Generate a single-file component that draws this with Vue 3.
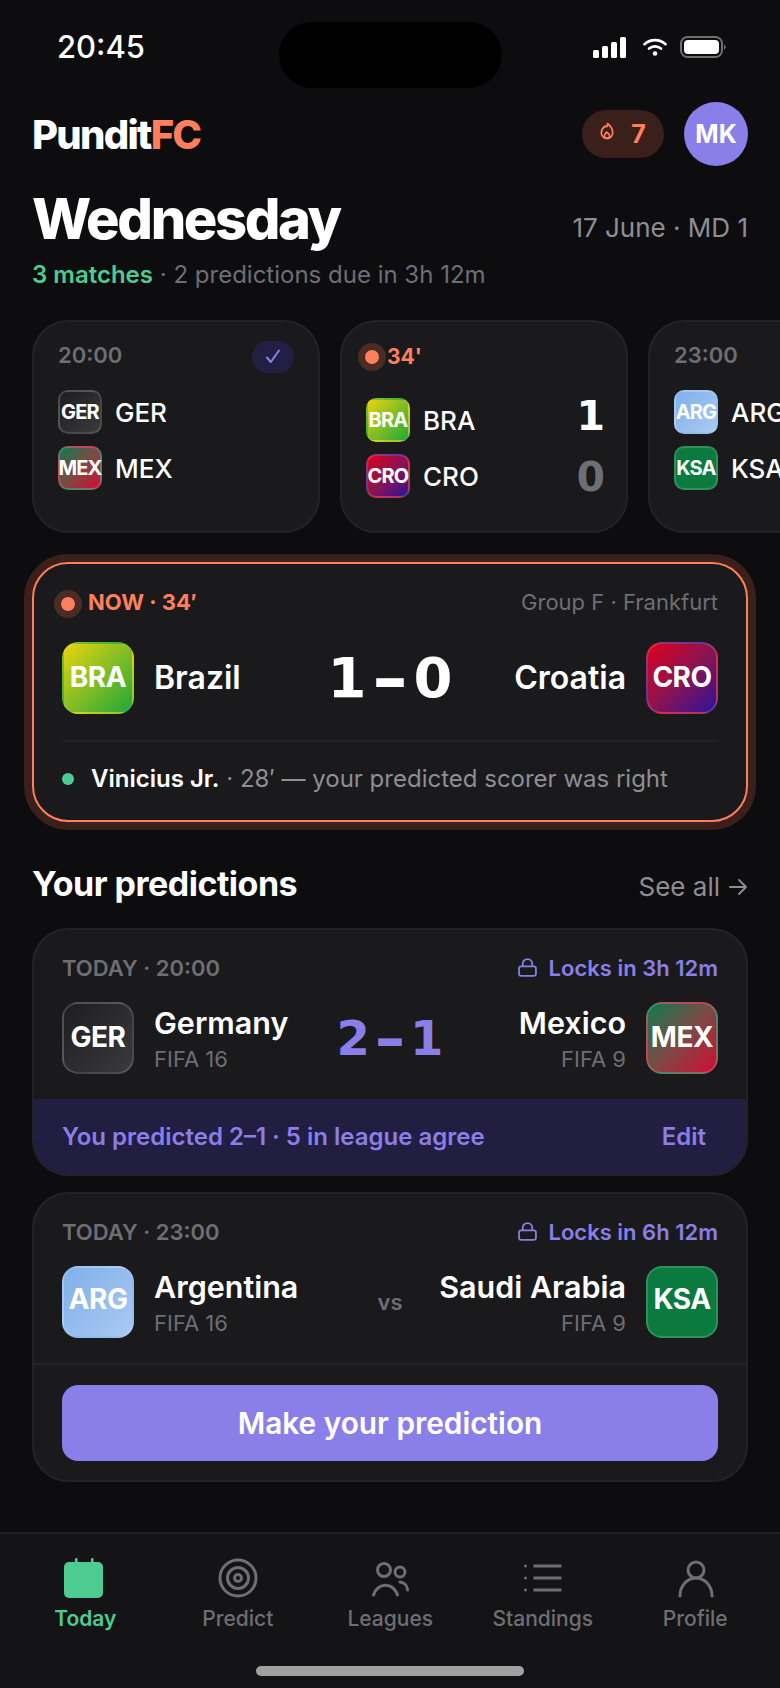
<script setup>
const cards = [
  { id: 1, time: '20:00', picked: true, teams: [{ code: 'GER', cls: 'ger' }, { code: 'MEX', cls: 'mex' }] },
  { id: 2, live: "34'", teams: [{ code: 'BRA', cls: 'bra', score: 1 }, { code: 'CRO', cls: 'cro', score: 0, dim: true }] },
  { id: 3, time: '23:00', teams: [{ code: 'ARG', cls: 'arg' }, { code: 'KSA', cls: 'ksa' }] }
]
const tabs = ['Today', 'Predict', 'Leagues', 'Standings', 'Profile']
</script>

<template>
  <div class="screen">
    <div class="status">
      <span class="clock">20:45</span>
      <div class="island"></div>
      <div class="status-icons">
        <svg width="33" height="21" viewBox="0 0 33 21" fill="#fff">
          <rect x="0" y="13" width="6" height="8" rx="1.5" />
          <rect x="9" y="9" width="6" height="12" rx="1.5" />
          <rect x="18" y="5" width="6" height="16" rx="1.5" />
          <rect x="27" y="0" width="6" height="21" rx="1.5" />
        </svg>
        <svg class="wifi" width="24" height="18" viewBox="0 0 24 18" fill="none" stroke="#fff" stroke-width="2.6" stroke-linecap="round">
          <path d="M1.5 6.2C7.5 .8 16.5 .8 22.5 6.2" />
          <path d="M6 10.6c3.5-3 8.5-3 12 0" />
          <circle cx="12" cy="15.5" r="2.3" fill="#fff" stroke="none" />
        </svg>
        <svg width="46" height="22" viewBox="0 0 46 22" fill="none">
          <rect x="1" y="1" width="41" height="20" rx="6.5" stroke="#6e6e73" stroke-width="2" />
          <rect x="4" y="4" width="35" height="14" rx="4" fill="#fff" />
          <path d="M44 8l2 3-2 3z" fill="#6e6e73" />
        </svg>
      </div>
    </div>

    <main class="content">
      <header class="top">
        <div class="logo">Pundit<span>FC</span></div>
        <div class="top-right">
          <div class="streak">
            <svg class="flame" width="14" height="18" viewBox="0 0 16 20" fill="none" stroke="#ff7f5c" stroke-width="2" stroke-linejoin="round">
              <path d="M8.5 1.5c.5 3.2-1 4.4-2.6 2.8C3.4 6.4 1.5 8.9 1.5 12c0 3.7 2.9 6.5 6.5 6.5s6.5-2.8 6.500-6.500c0-4.600-3-8.200-6-10.500z" />
              <path d="M8 18.500c-1.800 0-3-1.300-3-3 0-1.600 1.500-2.600 2.600-4.300 1.400 1.300 3.400 2.500 3.400 4.300 0 1.700-1.200 3-3 3z" />
            </svg>
            <span>7</span>
          </div>
          <div class="avatar">MK</div>
        </div>
      </header>

      <div class="title-row">
        <h1>Wednesday</h1>
        <span class="date">17 June · MD 1</span>
      </div>
      <p class="sub"><b>3 matches</b> · 2 predictions due in 3h 12m</p>

      <div class="rail">
        <article v-for="c in cards" :key="c.id" class="mini" :class="{ 'mini-live': c.live }">
          <div class="mini-head">
            <div v-if="c.live" class="live-tag"><i class="halo"><i></i></i><span>{{ c.live }}</span></div>
            <span v-else class="mini-time">{{ c.time }}</span>
            <span v-if="c.picked" class="check">
              <svg width="16" height="15" viewBox="0 0 16 15" fill="none" stroke="#8a7fe8" stroke-width="2" stroke-linecap="round" stroke-linejoin="round"><path d="M2 8.500l3.800 4.500L14 1.500" /></svg>
            </span>
          </div>
          <div v-for="t in c.teams" :key="t.code" class="mini-team">
            <span class="crest crest-s" :class="t.cls">{{ t.code }}</span>
            <span class="mini-code">{{ t.code }}</span>
            <span v-if="t.score !== undefined" class="mini-score" :class="{ dim: t.dim }">{{ t.score }}</span>
          </div>
        </article>
      </div>

      <section class="hero">
        <div class="hero-head">
          <div class="now"><i class="halo"><i></i></i><span>NOW · 34′</span></div>
          <span class="venue">Group F · Frankfurt</span>
        </div>
        <div class="hero-main">
          <div class="side">
            <span class="crest crest-l bra">BRA</span>
            <span class="name">Brazil</span>
          </div>
          <div class="hero-score"><span>1</span><span class="dash">–</span><span>0</span></div>
          <div class="side side-r">
            <span class="name">Croatia</span>
            <span class="crest crest-l cro">CRO</span>
          </div>
        </div>
        <div class="scorer">
          <i></i>
          <p><b>Vinicius Jr.</b> · 28′ — your predicted scorer was right</p>
        </div>
      </section>

      <div class="section-head">
        <h2>Your predictions</h2>
        <span class="see">See all
          <svg width="20" height="18" viewBox="0 0 20 18" fill="none" stroke="#8e8e93" stroke-width="1.800" stroke-linecap="round" stroke-linejoin="round"><path d="M2 9h16M11 2l7 7-7 7" /></svg>
        </span>
      </div>

      <section class="pred">
        <div class="pred-body">
          <div class="pred-head">
            <span class="when">TODAY · 20:00</span>
            <span class="locks">
              <svg width="19" height="19" viewBox="0 0 18 18" fill="none" stroke="#8a7fe8" stroke-width="1.700"><rect x="1" y="8" width="16" height="9" rx="2" /><path d="M4.500 8V5.500a4.500 4.500 0 0 1 9 0V8" /></svg>
              Locks in 3h 12m
            </span>
          </div>
          <div class="pred-main">
            <div class="side">
              <span class="crest crest-l ger">GER</span>
              <div class="who"><span class="name-p">Germany</span><span class="rank">FIFA 16</span></div>
            </div>
            <div class="pred-score"><span>2</span><span class="dash">–</span><span>1</span></div>
            <div class="side side-r">
              <div class="who who-r"><span class="name-p">Mexico</span><span class="rank">FIFA 9</span></div>
              <span class="crest crest-l mex">MEX</span>
            </div>
          </div>
        </div>
        <div class="band">
          <span>You predicted 2–1 · 5 in league agree</span>
          <span class="edit">Edit</span>
        </div>
      </section>

      <section class="pred pred-2">
        <div class="pred-body body-2">
          <div class="pred-head">
            <span class="when">TODAY · 23:00</span>
            <span class="locks">
              <svg width="19" height="19" viewBox="0 0 18 18" fill="none" stroke="#8a7fe8" stroke-width="1.700"><rect x="1" y="8" width="16" height="9" rx="2" /><path d="M4.500 8V5.500a4.500 4.500 0 0 1 9 0V8" /></svg>
              Locks in 6h 12m
            </span>
          </div>
          <div class="pred-main">
            <div class="side">
              <span class="crest crest-l crest-up arg">ARG</span>
              <div class="who"><span class="name-p">Argentina</span><span class="rank">FIFA 16</span></div>
            </div>
            <span class="vs">vs</span>
            <div class="side side-r">
              <div class="who who-r"><span class="name-p">Saudi Arabia</span><span class="rank">FIFA 9</span></div>
              <span class="crest crest-l crest-up ksa">KSA</span>
            </div>
          </div>
        </div>
        <div class="cta-wrap"><button class="cta">Make your prediction</button></div>
      </section>
    </main>

    <nav class="tabs">
      <div v-for="(t, i) in tabs" :key="t" class="tab" :class="{ on: i === 0 }">
        <svg v-if="i === 0" width="44" height="40" viewBox="0 0 44 40" fill="#4ecb91">
          <rect x="1" y="4" width="39" height="36" rx="5" />
          <rect x="12" y="0" width="2.500" height="8" rx="1" />
          <rect x="28" y="0" width="2.500" height="8" rx="1" />
        </svg>
        <svg v-else-if="i === 1" width="44" height="40" viewBox="0 0 44 40" fill="none" stroke="#6e6e73" stroke-width="3">
          <circle cx="22" cy="20" r="18" />
          <circle cx="22" cy="20" r="10.500" />
          <circle cx="22" cy="20" r="3.500" />
        </svg>
        <svg v-else-if="i === 2" width="44" height="40" viewBox="0 0 44 40" fill="none" stroke="#6e6e73" stroke-width="3" stroke-linecap="round">
          <circle cx="16" cy="12" r="6.500" />
          <circle cx="32" cy="14" r="5" />
          <path d="M5.500 37a12.500 13.500 0 0 1 24 0" />
          <path d="M32 24c4 .5 7.500 3.500 7.500 8" />
        </svg>
        <svg v-else-if="i === 3" width="44" height="40" viewBox="0 0 44 40" fill="none" stroke="#6e6e73" stroke-width="3">
          <path d="M12.500 8h28M12.500 20h28M12.500 32h28" />
          <circle cx="4.500" cy="8" r="1.500" fill="#6e6e73" stroke="none" />
          <circle cx="4.500" cy="20" r="1.500" fill="#6e6e73" stroke="none" />
          <circle cx="4.500" cy="32" r="1.500" fill="#6e6e73" stroke="none" />
        </svg>
        <svg v-else width="44" height="40" viewBox="0 0 44 40" fill="none" stroke="#6e6e73" stroke-width="3" stroke-linecap="round">
          <circle cx="23" cy="12" r="8" />
          <path d="M7 38c0-10 7-18 16-18s16 8 16 18" />
        </svg>
        <span>{{ t }}</span>
      </div>
      <div class="home-bar"></div>
    </nav>
  </div>
</template>

<style scoped>
* { box-sizing: border-box; }
.screen {
  width: 780px; height: 1688px; overflow: hidden;
  display: flex; flex-direction: column;
  background: #0d0d10; color: #fff;
  font-family: Inter, "Liberation Sans", sans-serif;
}
.status {
  flex: none; height: 102px; padding: 22px 56px 0 57px;
  display: grid; grid-template-columns: 1fr 223px 1fr;
  align-items: start;
}
.clock { font-size: 31px; font-weight: 500; line-height: 50px; }
.island { width: 223px; height: 66px; border-radius: 33px; background: #000; }
.status-icons { display: flex; align-items: center; justify-content: flex-end; gap: 13px; height: 50px; margin-right: -2px; }
.wifi { margin-left: 4px; }

.content { flex: 1; min-height: 0; overflow: hidden; }
.top { display: flex; justify-content: space-between; align-items: center; padding: 0 32px; height: 64px; }
.logo { font-size: 40px; font-weight: 800; letter-spacing: -1.750px; }
.logo span { color: #ff7f5c; }
.top-right { display: flex; align-items: center; gap: 20px; }
.streak {
  width: 82px; height: 48px; border-radius: 24px; background: #3a1f1b;
  display: flex; align-items: center; justify-content: center; gap: 17px;
  color: #ff7f5c; font-size: 25px; font-weight: 700;
}
.flame { margin-top: -6px; }
.avatar {
  width: 64px; height: 64px; border-radius: 50%; background: #8a7fe8;
  display: flex; align-items: center; justify-content: center;
  font-size: 25px; font-weight: 700;
}
.title-row {
  display: flex; justify-content: space-between; align-items: flex-start;
  padding: 0 32px; margin-top: 19px;
}
h1 { margin: 0; font-size: 56px; line-height: 68px; font-weight: 800; letter-spacing: -2.400px; }
.date { font-size: 26px; color: #8e8e93; margin-top: 27px; }
.sub { margin: 6.500px 32px 0; font-size: 24px; line-height: 30px; color: #6e6e73; }
.sub b { color: #4ecb91; font-weight: 600; }

.rail { display: flex; gap: 20px; padding-left: 32px; margin-top: 30px; overflow: hidden; }
.mini {
  flex: none; width: 288px; height: 213px; border-radius: 36px;
  background: #1a1a1d; border: 2px solid #232326; padding: 19px 24px;
}
.mini-head { display: flex; justify-content: space-between; align-items: flex-start; height: 32px; margin-bottom: 17px; }
.mini-time { font-size: 22px; line-height: 28px; font-weight: 600; color: #6e6e73; }
.check {
  width: 42px; height: 32px; border-radius: 16px; background: #231f44;
  display: flex; align-items: center; justify-content: center;
}
.live-tag { display: flex; align-items: center; color: #ff7f5c; font-size: 21px; font-weight: 700; margin-left: -8px; }
.live-tag span { margin-left: 1px; }
.halo {
  width: 28px; height: 28px; border-radius: 50%; background: #4a2c24; flex: none;
  display: flex; align-items: center; justify-content: center;
}
.halo i { width: 14px; height: 14px; border-radius: 50%; background: #ff7f5c; display: block; }
.mini-team { display: flex; align-items: center; height: 44px; margin-bottom: 12px; }
.mini-live .mini-head { margin-bottom: 25px; padding-top: 2px; }
.mini-code { font-size: 26px; font-weight: 500; margin-left: 13px; padding-top: 2px; }
.mini-score {
  margin-left: auto; font-family: "DejaVu Sans", sans-serif; font-weight: 700; font-size: 41px; line-height: 44px;
  margin-top: -8px; margin-right: -3px;
}
.mini-score.dim { color: #6e6e73; margin-top: 2px; }
.crest {
  flex: none; display: flex; align-items: center; justify-content: center;
  color: #fff; font-weight: 700; border: 2px solid rgba(255,255,255,.16);
  white-space: nowrap; overflow: visible;
}
.crest-s { width: 44px; height: 44px; border-radius: 10px; font-size: 20px; letter-spacing: -.8px; }
.crest-l { width: 72px; height: 72px; border-radius: 16px; font-size: 28px; letter-spacing: -.5px; padding-bottom: 2px; }
.crest-up { padding-bottom: 6px; }
.ger { background: linear-gradient(135deg, #1e1e20, #3a3a3c); }
.mex { background: linear-gradient(135deg, #0f7a4f, #7c4a45 50%, #d40b32); }
.bra { background: linear-gradient(135deg, #e8d40e, #1fa83a); border-color: rgba(255,255,255,.05); }
.cro { background: linear-gradient(135deg, #de0020, #8b1450 50%, #2d1399); }
.arg { background: linear-gradient(135deg, #7fb0ea, #a9c9f2); border-color: rgba(255,255,255,.1); }
.ksa { background: #0a7a3e; }

.hero {
  margin: 29px 32px 0; height: 260px; border: 2px solid #ff7f5c; border-radius: 36px;
  background: #1a1a1d; box-shadow: 0 0 0 8px #3a1f1b; padding: 24px 28px 0;
}
.hero-head { display: flex; justify-content: space-between; align-items: center; height: 28px; }
.now { display: flex; align-items: center; gap: 6px; color: #ff7f5c; font-size: 22px; font-weight: 700; margin-left: -8px; }
.now .halo { margin-top: 4px; }
.venue { font-size: 22px; color: #6e6e73; }
.hero-main { display: flex; justify-content: space-between; align-items: center; height: 72px; margin-top: 26px; }
.side { display: flex; align-items: center; gap: 20px; flex: none; }
.side-r { justify-content: flex-end; }
.hero-main > .side, .pred-main > .side { width: 260px; white-space: nowrap; }
.name { font-size: 32px; font-weight: 600; }
.hero-score {
  display: flex; align-items: center; gap: 6px;
  font-family: "DejaVu Sans", sans-serif; font-weight: 700; font-size: 56px; line-height: 56px;
}
.dash { font-size: 1.250em; line-height: 1; }
.scorer {
  margin-top: 26px; padding-top: 22px; border-top: 2px solid #222225;
  display: flex; align-items: center; gap: 17px;
}
.scorer > i { width: 12px; height: 12px; border-radius: 50%; background: #4ecb91; }
.scorer p { margin: 0; font-size: 24px; line-height: 30px; color: #8e8e93; }
.scorer b { color: #fff; font-weight: 600; }

.section-head {
  display: flex; justify-content: space-between; align-items: center;
  padding: 0 32px; margin-top: 42px; height: 40px;
}
h2 { margin: 0; font-size: 34px; font-weight: 700; letter-spacing: -.5px; }
.see { display: flex; align-items: center; gap: 8px; font-size: 26px; color: #8e8e93; margin-top: 6px; }

.pred { margin: 24px 32px 0; border-radius: 36px; background: #1a1a1d; border: 2px solid #232326; overflow: hidden; }
.pred-2 { margin-top: 16px; height: 290px; }
.pred-body { padding: 25px 28px 0; height: 169px; }
.body-2 { height: 171px; border-bottom: 2px solid #222225; }
.pred-head { display: flex; justify-content: space-between; align-items: center; height: 26px; }
.when { font-size: 22px; font-weight: 600; color: #6e6e73; }
.locks { display: flex; align-items: center; gap: 12px; font-size: 22px; font-weight: 600; color: #8a7fe8; }
.pred-main { display: flex; justify-content: space-between; align-items: center; height: 72px; margin-top: 21px; }
.who { display: flex; flex-direction: column; gap: 4px; padding-top: 2px; }
.who-r { align-items: flex-end; }
.name-p { font-size: 30.500px; line-height: 36px; font-weight: 600; }
.rank { font-size: 22px; line-height: 28px; color: #6e6e73; }
.pred-score {
  display: flex; align-items: center; gap: 5px; color: #8a7fe8;
  font-family: "DejaVu Sans", sans-serif; font-weight: 700; font-size: 48px; line-height: 48px;
}
.vs { font-size: 22px; font-weight: 600; color: #6e6e73; }
.band {
  height: 75px; background: #221e42; color: #8a7fe8; font-size: 24px; font-weight: 600;
  display: flex; justify-content: space-between; align-items: center; padding: 0 40px 0 28px;
}
.cta-wrap { padding: 20px 28px 0; }
.cta {
  display: block; width: 100%; height: 76px; border: 0; border-radius: 16px;
  background: #8a7fe8; color: #fff; font: 600 29.800px Inter, sans-serif;
}

.tabs {
  flex: none; height: 156px; background: #141416; border-top: 2px solid #222225;
  display: grid; grid-template-columns: repeat(5, 152.500px); padding: 24px 0 0 9px;
  position: relative;
}
.tab { display: flex; flex-direction: column; align-items: center; font-size: 21px; font-weight: 500; color: #6e6e73; }
.tab span { margin-top: 6px; line-height: 30px; }
.tab.on { color: #4ecb91; font-weight: 600; }
.home-bar {
  position: absolute; left: 256px; bottom: 12px; width: 268px; height: 10px;
  border-radius: 5px; background: #a1a1a1;
}
</style>
